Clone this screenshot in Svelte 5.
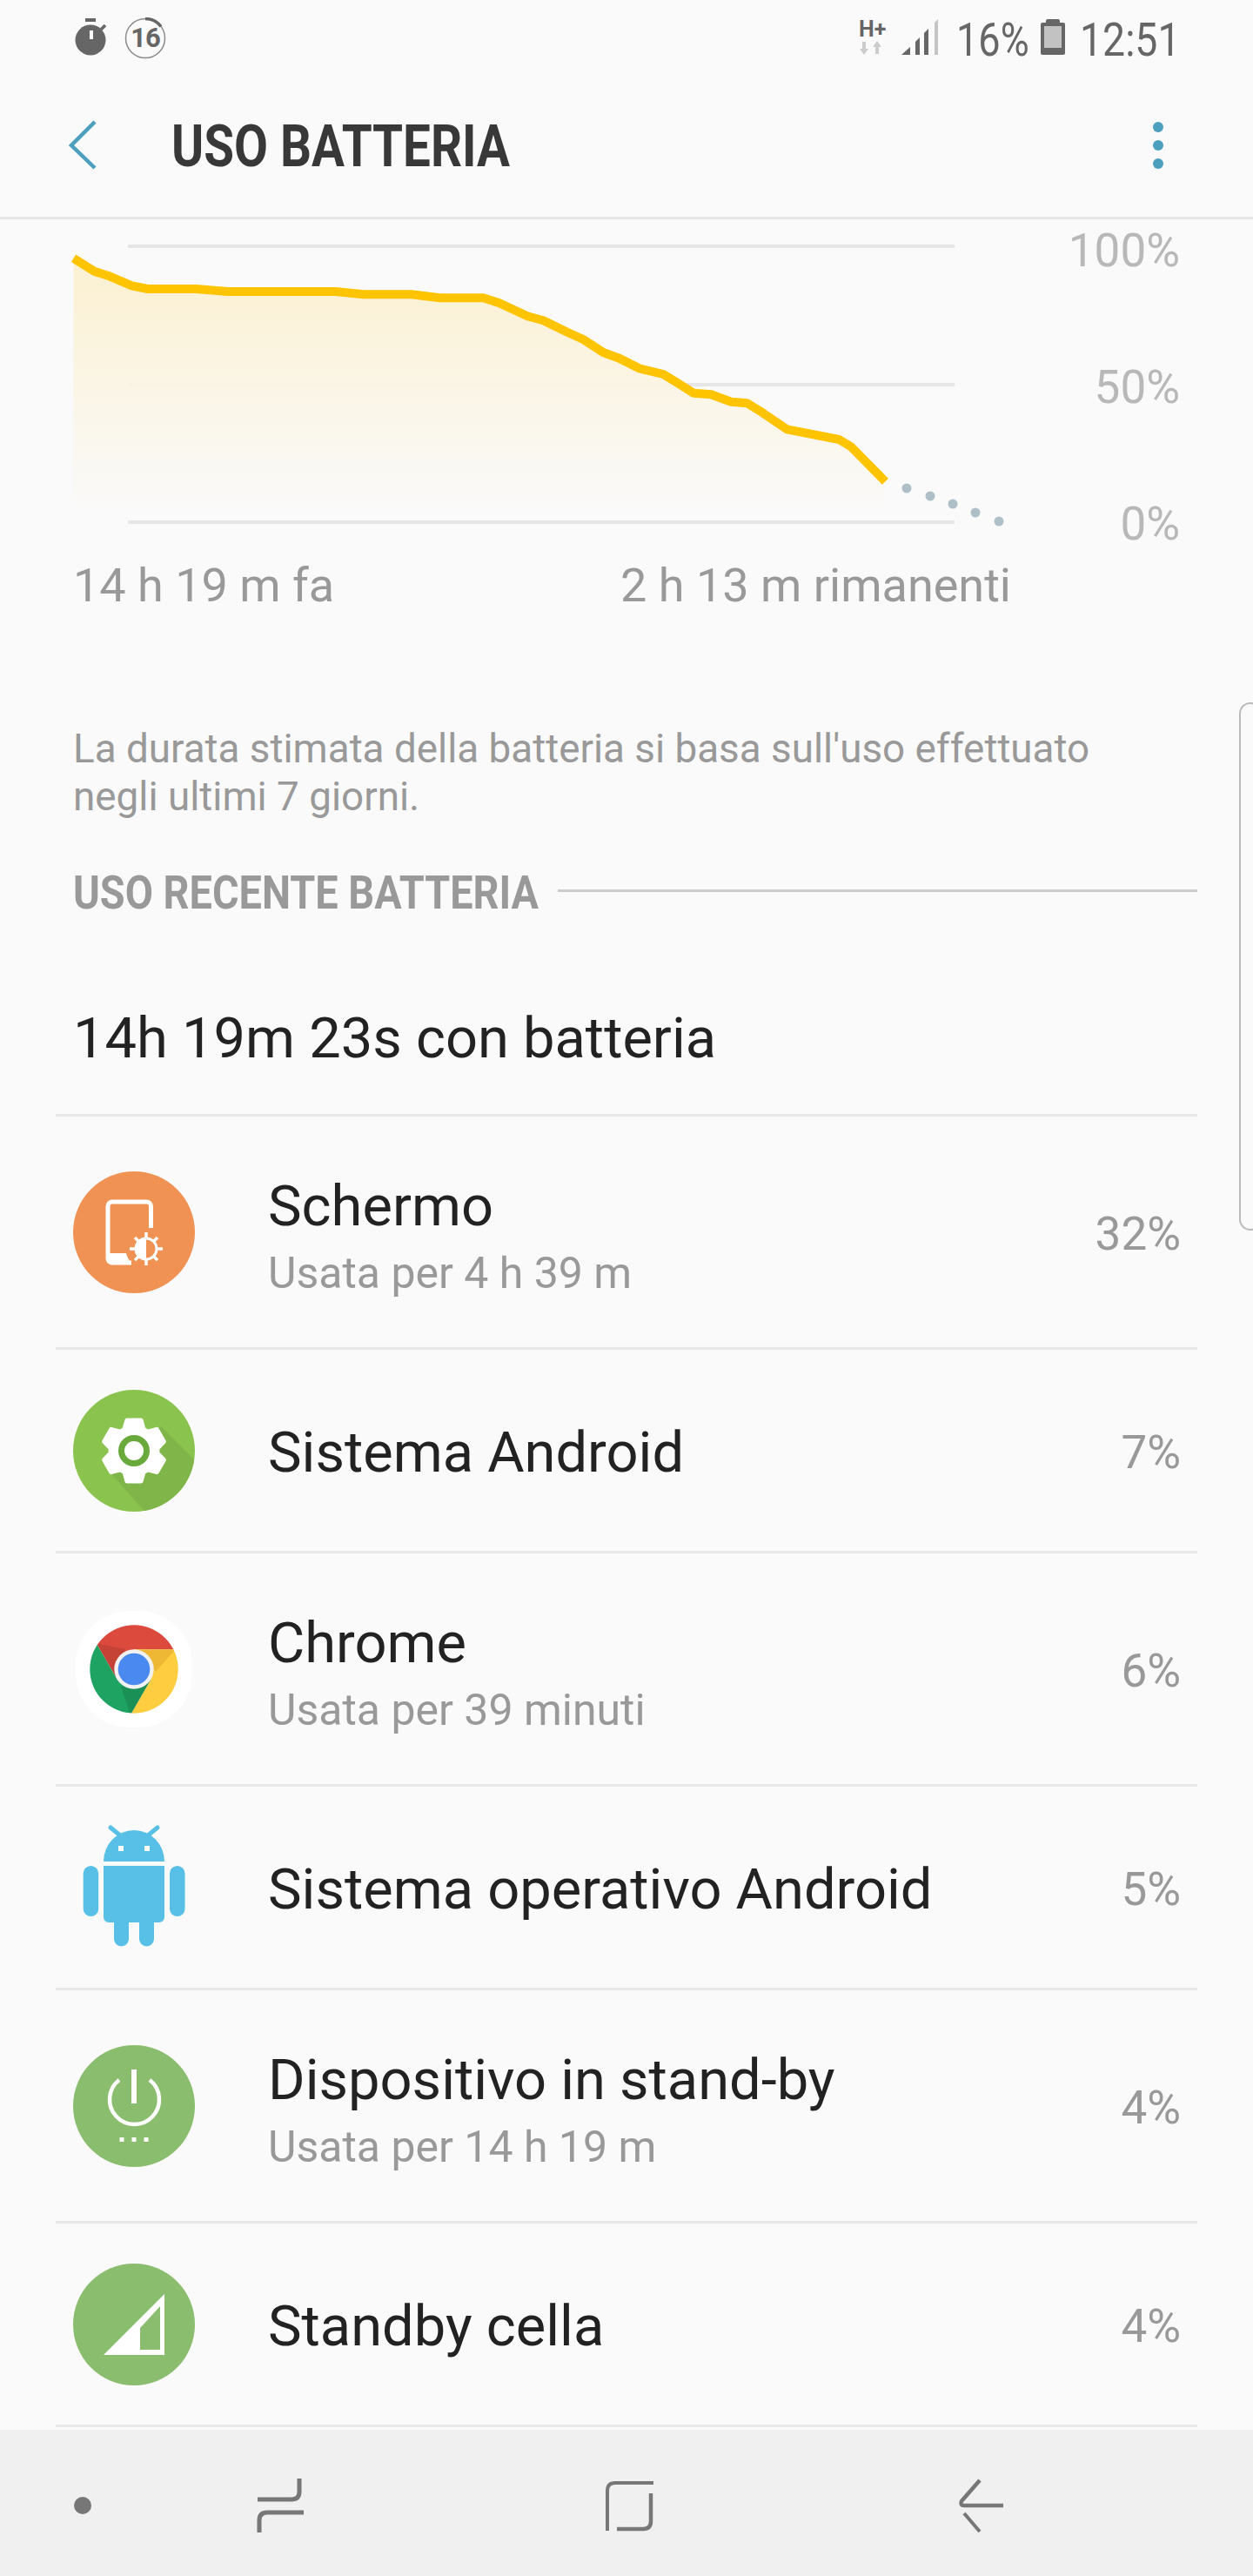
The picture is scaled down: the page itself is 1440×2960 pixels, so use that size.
<script>
	// chart points measured on the stretched zoom, mapped back to page px
	const raw = [[92,140],[118,185],[135,200],[165,235],[185,246],[245,246],[285,255],[420,255],[455,265],[515,265],[550,277],[605,277],[625,295],[660,340],[680,355],[710,395],[730,420],[755,465],[775,485],[800,520],[830,540],[845,565],[868,605],[890,610],[915,635],[935,640],[950,665],[985,730],[1050,765],[1065,790],[1108,910]]
	const pts = raw.map(([x, y]) => [+(x / 1.089).toFixed(1), +(250 + y / 3).toFixed(1)])
	const line = pts.map((p) => p.join(',')).join(' ')
	const last = pts[pts.length - 1]
	const area = `${pts[0][0]},590 ${line} ${last[0]},590`
	const dots = [[1042,561],[1069,570],[1095,579],[1121,589],[1148,599]]
	const grid = [[283,306,'100%'],[442,463,'50%'],[600,620,'0%']]

	// gear outline: six teeth round the middle
	const gear = []
	for (let i = 0; i < 6; i++) {
		const a = -90 + i * 60
		for (const [off, r] of [[-24,27],[-13,36],[13,36],[24,27]]) {
			const t = ((a + off) * Math.PI) / 180
			gear.push(`${(94 + r * Math.cos(t)).toFixed(1)},${(96 + r * Math.sin(t)).toFixed(1)}`)
		}
	}
	const gearPoints = gear.join(' ')

	const rows = [
		{ icon: 'screen', name: 'Schermo', sub: 'Usata per 4 h 39 m', pct: '32%' },
		{ icon: 'gear', name: 'Sistema Android', pct: '7%' },
		{ icon: 'chrome', name: 'Chrome', sub: 'Usata per 39 minuti', pct: '6%' },
		{ icon: 'android', name: 'Sistema operativo Android', pct: '5%' },
		{ icon: 'power', name: 'Dispositivo in stand-by', sub: 'Usata per 14 h 19 m', pct: '4%' },
		{ icon: 'cell', name: 'Standby cella', pct: '4%' }
	]
</script>

<div class="phone">
	<div class="status">
		<div class="status-left">
			<svg width="40" height="46" viewBox="85 21 40 46">
				<rect x="98" y="22" width="12" height="4" fill="#666" />
				<circle cx="104" cy="47" r="17.5" fill="#666" />
				<path d="M116 35l5-5" stroke="#666" stroke-width="3.5" />
				<rect x="103" y="36" width="4" height="10" fill="#fff" />
			</svg>
			<div class="timer">
				<svg width="48" height="48" viewBox="0 0 48 48">
					<circle cx="24" cy="24" r="22.5" fill="none" stroke="#8a8a8a" stroke-width="1.5" />
					<path d="M24 1.5A22.5 22.5 0 0 1 42 10.5" fill="none" stroke="#666" stroke-width="3.5" />
				</svg>
				<span>16</span>
			</div>
		</div>
		<div class="status-right">
			<div class="net">
				<span class="hplus">H+</span>
				<svg width="28" height="17" viewBox="0 0 28 17">
					<path d="M4 1h4v8h3l-5 7-5-7h3z" fill="#ccc" />
					<path d="M19 15h4V7h3l-5-7-5 7h3z" fill="#ccc" />
				</svg>
			</div>
			<svg class="signal" width="44" height="42" viewBox="1036 22 44 42">
				<path d="M1037 63l10-9v9z" fill="#666" />
				<path d="M1053 48l5-5v20h-5z" fill="#666" />
				<path d="M1063 38l5-5v30h-5z" fill="#666" />
				<path d="M1075 26l4-4v41h-4z" fill="#c4c4c4" />
			</svg>
			<span class="st pct">16%</span>
			<svg class="batt" width="28" height="42" viewBox="0 0 28 42">
				<path d="M6 3a2 2 0 0 1 2-2h12a2 2 0 0 1 2 2v2h4a2 2 0 0 1 2 2v33a2 2 0 0 1-2 2H2a2 2 0 0 1-2-2V7a2 2 0 0 1 2-2h4z" fill="#666" />
				<rect x="4" y="9" width="20" height="25" fill="#c2c2c2" />
			</svg>
			<span class="st clock">12:51</span>
		</div>
	</div>

	<header>
		<svg class="back" width="34" height="58" viewBox="78 139 34 58">
			<path d="M109 141L82 168l27 26" fill="none" stroke="#4c9fbd" stroke-width="4.5" />
		</svg>
		<h1>USO BATTERIA</h1>
		<div class="kebab"><i></i><i></i><i></i></div>
	</header>

	<main>
		<svg class="plot" width="1440" height="386" viewBox="0 252 1440 386">
			<defs>
				<linearGradient id="fade" x1="0" y1="0" x2="0" y2="1">
					<stop offset="0" stop-color="#fbefcc" />
					<stop offset="1" stop-color="#fafafa" />
				</linearGradient>
			</defs>
			{#each grid as [y, base, label]}
				<rect x="147" y={y - 2} width="950" height="4" fill="#e6e6e6" />
				<text x="1356" y={base} text-anchor="end">{label}</text>
			{/each}
			<polygon points={area} fill="url(#fade)" opacity="0.9" />
			<polyline points={line} fill="none" stroke="#ffc400" stroke-width="10" stroke-linejoin="round" />
			{#each dots as [x, y]}
				<circle cx={x} cy={y} r="5.5" fill="#aebfc7" />
			{/each}
		</svg>

		<div class="times">
			<span>14 h 19 m fa</span>
			<span>2 h 13 m rimanenti</span>
		</div>

		<p class="note">La durata stimata della batteria si basa sull'uso effettuato<br />negli ultimi 7 giorni.</p>

		<div class="section">
			<h2>USO RECENTE BATTERIA</h2>
			<div class="rule"></div>
		</div>

		<div class="list">
			<div class="summary">14h 19m 23s con batteria</div>
			{#each rows as row}
				<div class="row" class:tall={row.sub}>
					<div class="icon">
						{#if row.icon === 'screen'}
							<svg width="140" height="140" viewBox="24 26 140 140">
								<circle cx="94" cy="96" r="70" fill="#f09254" />
								<path d="M113.5 91V66a5 5 0 0 0-5-5H69a5 5 0 0 0-5 5v60a5 5 0 0 0 5 5h22" fill="none" stroke="#fff" stroke-width="5" />
								<path d="M64 120h21c1 4 3 8 6 12H69a6 6 0 0 1-6-6z" fill="#fff" />
								<circle cx="108" cy="115" r="12" fill="none" stroke="#fff" stroke-width="3" />
								<path d="M108 103a12 12 0 0 0 0 24z" fill="#fff" />
								<path d="M108 96v8M108 126v8M89 115h8M119 115h8M95 102l5 5M116 123l5 5M95 128l5-5M116 107l5-5" stroke="#fff" stroke-width="3.5" />
							</svg>
						{:else if row.icon === 'gear'}
							<svg width="140" height="140" viewBox="24 26 140 140">
								<defs>
									<clipPath id="disc"><circle cx="94" cy="96" r="70" /></clipPath>
								</defs>
								<circle cx="94" cy="96" r="70" fill="#8bc34f" />
								<path d="M63 117L125 68L170 113L170 170L110 170z" fill="#7fb549" clip-path="url(#disc)" />
								<polygon points={gearPoints} fill="#fff" stroke="#fff" stroke-width="5" stroke-linejoin="round" />
								<circle cx="94" cy="96" r="14.5" fill="#fff" stroke="#6aa93c" stroke-width="7" />
							</svg>
						{:else if row.icon === 'chrome'}
							<div class="squircle">
								<svg width="102" height="102" viewBox="-51 -51 102 102">
									<defs>
										<clipPath id="ball"><circle r="50.7" /></clipPath>
									</defs>
									<g clip-path="url(#ball)">
										<path d="M0-22.7H70V-70H-62V-62L-19.66 11.35z" fill="#dc4a3d" />
										<path d="M-19.66 11.35L-44-30L-10-23z" fill="#000" opacity="0.1" />
										<g transform="rotate(120)">
											<path d="M0-22.7H70V-70H-62V-62L-19.66 11.35z" fill="#ffcd40" />
											<path d="M-19.66 11.35L-44-30L-10-23z" fill="#a65a00" opacity="0.18" />
										</g>
										<g transform="rotate(240)">
											<path d="M0-22.7H70V-70H-62V-62L-19.66 11.35z" fill="#1ea362" />
											<path d="M-19.66 11.35L-44-30L-10-23z" fill="#000" opacity="0.12" />
										</g>
									</g>
									<circle r="22.7" fill="#f1f1f1" />
									<circle r="18.3" fill="#4a8af0" />
								</svg>
							</div>
						{:else if row.icon === 'android'}
							<svg width="130" height="150" viewBox="29 265 130 150">
								<g fill="#58c0e6">
									<path d="M59 310a35 36 0 0 1 70 0z" />
									<path d="M59 315h70v59a6 6 0 0 1-6 6H117v19a8.500 8.500 0 0 1-17 0V380H88v19a8.500 8.500 0 0 1-17 0V380H65a6 6 0 0 1-6-6z" />
									<rect x="35.700" y="315" width="17.500" height="58" rx="8.700" />
									<rect x="135" y="315" width="17.500" height="58" rx="8.700" />
								</g>
								<path d="M67 271l11 9M121 271l-11 9" stroke="#58c0e6" stroke-width="5" stroke-linecap="round" />
								<rect x="76" y="292" width="6" height="6" fill="#fff" />
								<rect x="106" y="292" width="6" height="6" fill="#fff" />
							</svg>
						{:else if row.icon === 'power'}
							<svg width="140" height="140" viewBox="24 20 140 140">
								<circle cx="94" cy="90" r="70" fill="#8abd6d" />
								<path d="M77 60A28.500 28.500 0 1 0 112 60" fill="none" stroke="#fff" stroke-width="4.500" />
								<rect x="91" y="48" width="6" height="39" fill="#fff" />
								<rect x="77.500" y="126" width="5" height="5" fill="#fff" />
								<rect x="91.500" y="126" width="5" height="5" fill="#fff" />
								<rect x="105.500" y="126" width="5" height="5" fill="#fff" />
							</svg>
						{:else}
							<svg width="140" height="140" viewBox="24 271 140 140">
								<circle cx="94" cy="341" r="70" fill="#8abd6d" />
								<path d="M59 376L129 306V376z" fill="#fff" />
								<path d="M101 345L124 320V370H101z" fill="#8abd6d" />
							</svg>
						{/if}
					</div>
					<div class="label">
						<div class="name">{row.name}</div>
						{#if row.sub}<div class="sub">{row.sub}</div>{/if}
					</div>
					<div class="percent">{row.pct}</div>
				</div>
			{/each}
		</div>
	</main>

	<nav>
		<svg width="1440" height="168" viewBox="0 2792 1440 168">
			<circle cx="95" cy="2879" r="10" fill="#777" />
			<g fill="none" stroke="#777">
				<path d="M344 2848v15q0 9-9 9h-39" stroke-width="5" />
				<path d="M349 2887h-42q-9 0-9 9v14" stroke-width="5" />
				<path d="M751 2853h-44q-9 0-9 9v46" stroke-width="4" />
				<path d="M748 2865v32q0 9-9 9h-30" stroke-width="4.500" />
				<path d="M1126 2850l-21 24q-2 5 3 5h45" stroke-width="4.500" />
				<path d="M1108 2888l18 21" stroke-width="4" />
			</g>
		</svg>
	</nav>

	<div class="edge"></div>
</div>

<style>
	:global(body) {
		margin: 0;
		background: #fafafa;
	}

	.phone {
		position: relative;
		display: flex;
		flex-direction: column;
		width: 1440px;
		height: 2960px;
		overflow: hidden;
		background: #fafafa;
		font-family: Roboto, "Noto Sans", sans-serif;
	}

	.status {
		display: flex;
		justify-content: space-between;
		align-items: flex-start;
		height: 80px;
		padding: 20px 93px 0 85px;
		box-sizing: border-box;
		color: #666;
	}

	.status-left {
		display: flex;
		gap: 18px;
	}

	.timer {
		position: relative;
		width: 48px;
		height: 48px;
	}

	.timer svg {
		display: block;
	}

	.timer span {
		position: absolute;
		inset: 0;
		text-align: center;
		font-size: 31px;
		font-weight: 700;
		line-height: 48px;
		letter-spacing: -1px;
		color: #666;
	}

	.status-right {
		display: flex;
		align-items: flex-start;
		height: 46px;
	}

	.net {
		display: flex;
		flex-direction: column;
		width: 30px;
		margin-top: 1px;
	}

	.hplus {
		font-size: 25px;
		font-weight: 700;
		line-height: 25px;
		height: 26px;
		letter-spacing: 0;
		color: #666;
	}

	.signal {
		margin: 2px 0 0 18px;
	}

	.st {
		display: inline-block;
		font-size: 53px;
		line-height: 46px;
		height: 46px;
		white-space: nowrap;
		transform-origin: left center;
		margin-top: 3px;
	}

	.pct {
		width: 97px;
		margin-left: 20px;
		transform: scaleX(0.85);
	}

	.batt {
		margin-top: 1px;
	}

	.clock {
		width: 106px;
		margin-left: 17px;
		transform: scaleX(0.875);
	}

	header {
		display: flex;
		align-items: center;
		height: 172px;
		box-sizing: border-box;
		border-bottom: 3px solid #e6e6e6;
		padding: 4px 103px 0 78px;
	}

	h1 {
		flex: 1;
		margin: 4px 0 0 85px;
		font-size: 66px;
		font-weight: 700;
		color: #383838;
		white-space: nowrap;
		transform-origin: left center;
		transform: scaleX(0.856);
	}

	.kebab {
		display: flex;
		flex-direction: column;
		gap: 9px;
	}

	.kebab i {
		display: block;
		width: 12px;
		height: 12px;
		border-radius: 50%;
		background: #4c9fbd;
	}

	main {
		flex: 1;
		min-height: 0;
	}

	.plot {
		display: block;
	}

	.plot text {
		font-size: 53px;
		fill: #b8b8b8;
	}

	.times {
		display: flex;
		justify-content: space-between;
		height: 70px;
		padding: 0 278px 0 84px;
		font-size: 54px;
		line-height: 70px;
		color: #999;
	}

	.note {
		margin: 125px 0 0;
		padding-left: 84px;
		font-size: 45.8px;
		line-height: 55px;
		color: #999;
	}

	.section {
		display: flex;
		align-items: center;
		height: 50px;
		margin-top: 57px;
		padding: 0 64px 0 84px;
	}

	h2 {
		flex: none;
		width: 557px;
		margin: 0;
		font-size: 54px;
		font-weight: 700;
		color: #999;
		white-space: nowrap;
		transform-origin: left center;
		transform: scaleX(0.867);
	}

	.rule {
		flex: 1;
		height: 3px;
		margin-bottom: 3px;
		background: #ccc;
	}

	.list {
		margin: 54px 64px 0;
	}

	.summary {
		display: flex;
		align-items: center;
		height: 179px;
		box-sizing: border-box;
		padding: 2px 0 0 20px;
		border-bottom: 3px solid #e8e8e8;
		font-size: 65px;
		color: #222;
	}

	.row {
		display: flex;
		align-items: center;
		height: 234px;
		box-sizing: border-box;
		padding: 0 19px 0 20px;
		border-bottom: 3px solid #e8e8e8;
	}

	.row.tall {
		height: 268px;
	}

	.icon {
		display: flex;
		flex: none;
		justify-content: center;
		width: 140px;
	}

	.icon svg {
		display: block;
	}

	.squircle {
		display: flex;
		align-items: center;
		justify-content: center;
		width: 134px;
		height: 134px;
		border-radius: 46%;
		background: #fff;
	}

	.label {
		flex: 1;
		margin: 4px 0 0 84px;
	}

	.row.tall .label {
		margin-top: 9px;
	}

	.name {
		font-size: 65px;
		line-height: 72px;
		color: #222;
	}

	.sub {
		margin-top: 13px;
		font-size: 50px;
		line-height: 56px;
		color: #999;
	}

	.percent {
		margin-top: 4px;
		font-size: 53px;
		color: #999;
	}

	nav {
		flex: none;
		height: 168px;
		background: #f0f0f0;
	}

	nav svg {
		display: block;
	}

	.edge {
		position: absolute;
		top: 807px;
		right: -10px;
		width: 22px;
		height: 603px;
		border: 2px solid #bbb;
		border-radius: 14px;
	}
</style>
